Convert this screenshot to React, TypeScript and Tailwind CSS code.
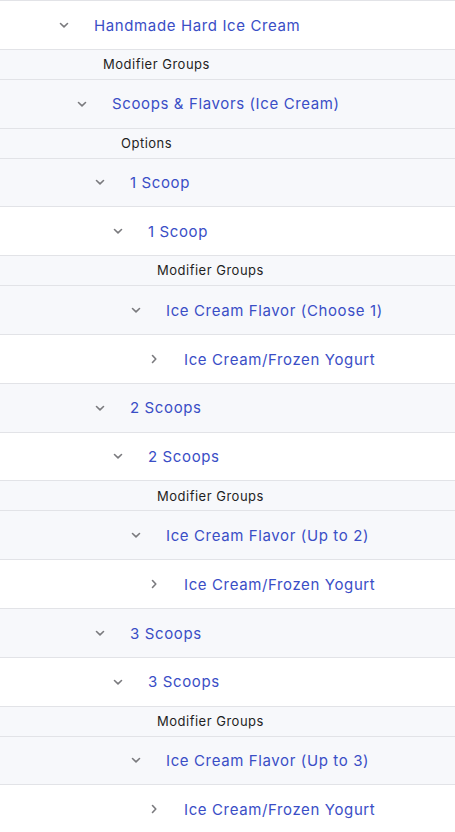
import React from 'react';

type Row =
  | { kind: 'item'; level: number; label: string; open: boolean; gray: boolean }
  | { kind: 'header'; level: number; label: string };

const rows: Row[] = [
  { kind: 'item', level: 0, label: 'Handmade Hard Ice Cream', open: true, gray: false },
  { kind: 'header', level: 0, label: 'Modifier Groups' },
  { kind: 'item', level: 1, label: 'Scoops & Flavors (Ice Cream)', open: true, gray: true },
  { kind: 'header', level: 1, label: 'Options' },
  { kind: 'item', level: 2, label: '1 Scoop', open: true, gray: true },
  { kind: 'item', level: 3, label: '1 Scoop', open: true, gray: false },
  { kind: 'header', level: 3, label: 'Modifier Groups' },
  { kind: 'item', level: 4, label: 'Ice Cream Flavor (Choose 1)', open: true, gray: true },
  { kind: 'item', level: 5, label: 'Ice Cream/Frozen Yogurt', open: false, gray: false },
  { kind: 'item', level: 2, label: '2 Scoops', open: true, gray: true },
  { kind: 'item', level: 3, label: '2 Scoops', open: true, gray: false },
  { kind: 'header', level: 3, label: 'Modifier Groups' },
  { kind: 'item', level: 4, label: 'Ice Cream Flavor (Up to 2)', open: true, gray: true },
  { kind: 'item', level: 5, label: 'Ice Cream/Frozen Yogurt', open: false, gray: false },
  { kind: 'item', level: 2, label: '3 Scoops', open: true, gray: true },
  { kind: 'item', level: 3, label: '3 Scoops', open: true, gray: false },
  { kind: 'header', level: 3, label: 'Modifier Groups' },
  { kind: 'item', level: 4, label: 'Ice Cream Flavor (Up to 3)', open: true, gray: true },
  { kind: 'item', level: 5, label: 'Ice Cream/Frozen Yogurt', open: false, gray: false },
];

// indent per nesting level (18px steps)
const itemIndent = ['pl-[56px]', 'pl-[74px]', 'pl-[92px]', 'pl-[110px]', 'pl-[128px]', 'pl-[146px]'];
const headerIndent = ['pl-[103px]', 'pl-[121px]', 'pl-[139px]', 'pl-[157px]', 'pl-[175px]', 'pl-[193px]'];

function Chevron({ open }: { open: boolean }) {
  return (
    <svg width="16" height="16" viewBox="0 0 16 16" fill="none" stroke="#7a7a7e" strokeWidth="1.6" strokeLinecap="round" strokeLinejoin="round">
      {open ? <path d="M4.5 6.5 8 9.8l3.5-3.3" /> : <path d="M6.5 4.5 9.8 8l-3.3 3.5" />}
    </svg>
  );
}

export default function App() {
  return (
    <div className="w-[455px] h-[832px] overflow-hidden bg-white border-t border-[#e2e3e7] font-['Inter','Noto_Sans',sans-serif]">
      {rows.map((row, i) =>
        row.kind === 'item' ? (
          <div
            key={i}
            className={`h-[48.8px] flex items-center border-b border-[#e2e3e7] ${row.gray ? 'bg-[#f7f8fb]' : 'bg-white'} ${itemIndent[row.level]}`}
          >
            <Chevron open={row.open} />
            <span className="ml-[22px] pt-[2px] text-[15px] text-[#3a4ec6] tracking-[0.62px]">{row.label}</span>
          </div>
        ) : (
          <div
            key={i}
            className={`h-[30px] flex items-center border-b border-[#e2e3e7] bg-[#f7f8fb] ${headerIndent[row.level]}`}
          >
            <span className="pt-[1px] text-[13px] text-[#1f1f24] tracking-[0.5px]">{row.label}</span>
          </div>
        )
      )}
    </div>
  );
}
